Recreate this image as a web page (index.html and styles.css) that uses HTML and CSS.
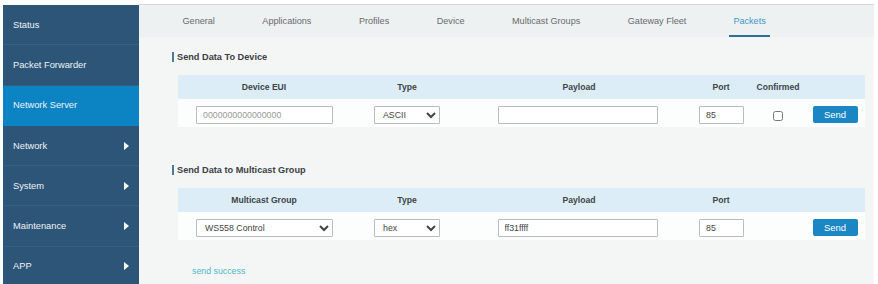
FILE: index.html
```html
<!DOCTYPE html>
<html>
<head>
<meta charset="utf-8">
<link rel="stylesheet" href="styles.css">
</head>
<body>
<div class="page">
  <nav class="sidebar">
    <div class="nav-item">Status</div>
    <div class="nav-item">Packet Forwarder</div>
    <div class="nav-item active">Network Server</div>
    <div class="nav-item">Network<span class="arrow"></span></div>
    <div class="nav-item">System<span class="arrow"></span></div>
    <div class="nav-item">Maintenance<span class="arrow"></span></div>
    <div class="nav-item">APP<span class="arrow"></span></div>
  </nav>
  <main class="main">
    <div class="tabs">
      <div class="tab">General</div>
      <div class="tab">Applications</div>
      <div class="tab">Profiles</div>
      <div class="tab">Device</div>
      <div class="tab">Multicast Groups</div>
      <div class="tab">Gateway Fleet</div>
      <div class="tab current">Packets</div>
    </div>
    <div class="content">
      <h3 class="section-title">Send Data To Device</h3>
      <div class="table">
        <div class="row head">
          <div class="cell">Device EUI</div>
          <div class="cell">Type</div>
          <div class="cell">Payload</div>
          <div class="cell">Port</div>
          <div class="cell">Confirmed</div>
          <div class="cell"></div>
        </div>
        <div class="row body">
          <div class="cell"><input class="field w-eui" type="text" placeholder="0000000000000000"></div>
          <div class="cell"><select class="field w-type"><option>ASCII</option></select></div>
          <div class="cell"><input class="field w-payload" type="text"></div>
          <div class="cell"><input class="field w-port" type="text" value="85"></div>
          <div class="cell"><input class="check" type="checkbox"></div>
          <div class="cell"><button class="send">Send</button></div>
        </div>
      </div>

      <h3 class="section-title second">Send Data to Multicast Group</h3>
      <div class="table">
        <div class="row head">
          <div class="cell">Multicast Group</div>
          <div class="cell">Type</div>
          <div class="cell">Payload</div>
          <div class="cell">Port</div>
          <div class="cell"></div>
          <div class="cell"></div>
        </div>
        <div class="row body">
          <div class="cell"><select class="field w-eui"><option>WS558 Control</option></select></div>
          <div class="cell"><select class="field w-type"><option>hex</option></select></div>
          <div class="cell"><input class="field w-payload" type="text" value="ff31ffff"></div>
          <div class="cell"><input class="field w-port" type="text" value="85"></div>
          <div class="cell"></div>
          <div class="cell"><button class="send">Send</button></div>
        </div>
      </div>
      <div class="status-msg">send success</div>
    </div>
  </main>
</div>
</body>
</html>
```

FILE: styles.css
```css
* { box-sizing: border-box; }
html, body {
  margin: 0;
  padding: 0;
  background: #ffffff;
  font-family: "Liberation Sans", Arial, sans-serif;
  font-size: 9px;
}
.page {
  display: flex;
  padding: 4px 5px 0 3px;
  height: 284px;
  overflow: hidden;
}
.sidebar {
  width: 136px;
  flex: none;
  background: #2d5577;
  margin-top: 1px;
}
.nav-item {
  height: 40.3px;
  display: flex;
  align-items: center;
  justify-content: space-between;
  padding: 0 10px 0 10px;
  color: #eef3f7;
  font-size: 9.3px;
  border-bottom: 1px solid rgba(255,255,255,0.06);
}
.nav-item.active {
  background: #0c83c3;
  border-bottom-color: transparent;
}
.arrow {
  width: 0;
  height: 0;
  border-top: 4px solid transparent;
  border-bottom: 4px solid transparent;
  border-left: 5px solid #ffffff;
}
.main {
  flex: 1;
  background: #f4f6f6;
  border-top: 1px solid #d4d7d9;
  display: flex;
  flex-direction: column;
}
.tabs {
  height: 32px;
  background: #eef1f2;
  display: flex;
  align-items: stretch;
  padding-left: 43.5px;
  gap: 47.5px;
}
.tab {
  display: flex;
  align-items: center;
  color: #666b6e;
  font-size: 9.1px;
  padding-top: 1px;
  border-bottom: 2px solid transparent;
}
.tab.current {
  color: #3c97c8;
  border-bottom-color: #2a6f98;
  padding: 1px 4px 0;
  margin-left: -4.5px;
}
.content {
  padding: 15px 9px 0 39px;
}
.section-title {
  margin: 0;
  font-size: 9.2px;
  font-weight: bold;
  color: #3b4045;
  border-left: 2px solid #4a7a99;
  padding-left: 3px;
  line-height: 10px;
  height: 10px;
  margin-left: -6px;
}
.section-title.second { margin-top: 38px; }
.table {
  margin-top: 13px;
  width: 687px;
}
.row {
  display: grid;
  grid-template-columns: 172px 114px 230px 54px 60px 57px;
  align-items: center;
}
.row.head {
  background: #dcedf7;
  height: 24px;
  color: #3f4448;
  font-weight: bold;
  font-size: 8.6px;
}
.row.body {
  background: #fcfdfd;
  height: 28px;
  padding-top: 4px;
}
.cell {
  display: flex;
  justify-content: center;
  align-items: center;
}
.field {
  height: 18px;
  border: 1px solid #b8bcbf;
  background: #ffffff;
  font-family: "Liberation Sans", Arial, sans-serif;
  font-size: 8.8px;
  color: #444;
  padding: 0 6px;
  border-radius: 1px;
  margin: 0;
}
input.field::placeholder { color: #999; }
select.field { padding: 0 2px 0 4px; }
.w-eui { width: 137px; margin-left: 1px; }
.w-type { width: 66px; }
.w-payload { width: 160px; margin-left: -3px; }
.w-port { width: 45px; margin-left: 1px; }
.check {
  width: 10px;
  height: 10px;
  margin: 2px 0 0 0;
}
.send {
  width: 45px;
  height: 17px;
  background: #1a86c4;
  color: #ffffff;
  border: none;
  border-radius: 2px;
  font-family: "Liberation Sans", Arial, sans-serif;
  font-size: 9.5px;
  padding: 0;
  margin-left: -3px;
  margin-top: -1px;
}
.status-msg {
  margin-top: 26px;
  margin-left: 14px;
  color: #4fb7c9;
  font-size: 8.8px;
}
```
